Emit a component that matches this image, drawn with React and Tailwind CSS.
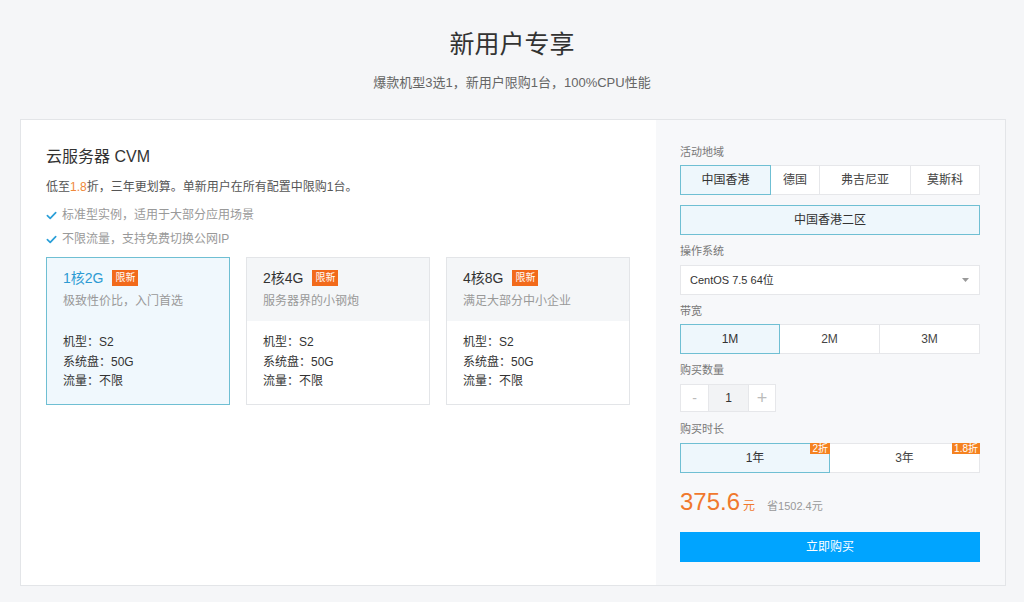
import React, { useState } from "react";

const FONT = "font-['Liberation_Sans','Noto_Sans_CJK_SC',sans-serif]";

const PLANS = [
  { name: "1核2G", desc: "极致性价比，入门首选" },
  { name: "2核4G", desc: "服务器界的小钢炮" },
  { name: "4核8G", desc: "满足大部分中小企业" },
];

// widths include the 1px overlap of the shared border
const REGIONS = [
  { name: "中国香港", w: "w-[91px]" },
  { name: "德国", w: "w-[50px]" },
  { name: "弗吉尼亚", w: "w-[92px]" },
  { name: "莫斯科", w: "w-[70px]" },
];

const Check = () => (
  <svg className="w-[11px] h-[11px] mr-[5px]" viewBox="0 0 12 12" fill="none">
    <path d="M1.5 6.2 L4.6 9.2 L10.6 2.8" stroke="#2a9fd8" strokeWidth="1.8" strokeLinecap="round" strokeLinejoin="round" />
  </svg>
);

const Label = ({ children, className = "" }) => (
  <div className={`text-[11px] leading-[16px] text-[#777] ${className}`}>{children}</div>
);

const optionClass = (active) =>
  active
    ? "relative z-10 border border-[#6fbfd3] bg-[#eef7fc] text-[#333]"
    : "relative border border-[#e6e7ea] bg-white text-[#444]";

const App = () => {
  const [plan, setPlan] = useState(0);
  const [region, setRegion] = useState(0);
  const [bw, setBw] = useState(0);
  const [years, setYears] = useState(0);
  const [count, setCount] = useState(1);

  return (
    <div className={`min-h-[602px] bg-[#f5f6f8] ${FONT}`}>
      <div className="pt-[28px] text-center">
        <h1 className="text-[25px] leading-[32px] text-[#333]">新用户专享</h1>
        <p className="mt-[13px] text-[13px] leading-[20px] text-[#666]">
          爆款机型3选1，新用户限购1台，100%CPU性能
        </p>
      </div>

      <div className="mt-[26px] mx-[20px] w-[986px] h-[467px] border border-[#e3e5e8] flex">
        {/* left */}
        <div className="w-[635px] bg-white px-[25px] pt-[26px]">
          <h2 className="text-[16px] leading-[22px] text-[#333]">云服务器 CVM</h2>
          <p className="mt-[9px] text-[12px] leading-[20px] text-[#555]">
            低至<span className="text-[#f0883a]">1.8</span>折，三年更划算。单新用户在所有配置中限购1台。
          </p>
          <div className="mt-[8px] flex items-center text-[12px] leading-[20px] text-[#999]">
            <Check />标准型实例，适用于大部分应用场景
          </div>
          <div className="mt-[4px] flex items-center text-[12px] leading-[20px] text-[#999]">
            <Check />不限流量，支持免费切换公网IP
          </div>

          <div className="mt-[8px] flex gap-[16px]">
            {PLANS.map((p, i) => {
              const active = plan === i;
              return (
                <div
                  key={p.name}
                  onClick={() => setPlan(i)}
                  className={`w-[184px] h-[148px] border cursor-pointer ${
                    active ? "border-[#6fbfd3] bg-[#f0f8fd]" : "border-[#e3e5e8] bg-white"
                  }`}
                >
                  <div className={`h-[63px] px-[16px] pt-[10px] ${active ? "" : "bg-[#f4f6f8]"}`}>
                    <div className="flex items-center h-[20px]">
                      <span className={`text-[14px] ${active ? "text-[#2d9bd3]" : "text-[#333]"}`}>{p.name}</span>
                      <span className="ml-[9px] bg-[#f26a1b] text-white text-[10px] leading-[16px] px-[3px]">限新</span>
                    </div>
                    <div className="mt-[4px] text-[12px] leading-[18px] text-[#999]">{p.desc}</div>
                  </div>
                  <div className="px-[16px] pt-[12px] text-[12px] leading-[19.5px] text-[#333]">
                    <div>机型：S2</div>
                    <div>系统盘：50G</div>
                    <div>流量：不限</div>
                  </div>
                </div>
              );
            })}
          </div>
        </div>

        {/* right */}
        <div className="flex-1 bg-[#f7f8fa] pl-[24px] pr-[25px] pt-[24px]">
          <Label>活动地域</Label>
          <div className="mt-[5px] flex">
            {REGIONS.map((r, i) => (
              <button
                key={r.name}
                onClick={() => setRegion(i)}
                className={`${r.w} h-[30px] text-[12px] ${i > 0 ? "-ml-px" : ""} ${optionClass(region === i)}`}
              >
                {r.name}
              </button>
            ))}
          </div>
          <button className={`mt-[10px] w-[300px] h-[30px] text-[12px] ${optionClass(true)}`}>中国香港二区</button>

          <Label className="mt-[8px]">操作系统</Label>
          <div className="mt-[6px] h-[30px] border border-[#e6e7ea] bg-white flex items-center justify-between pl-[9px] pr-[10px]">
            <span className="text-[11px] text-[#333]">CentOS 7.5 64位</span>
            <svg className="w-[7px] h-[4px]" viewBox="0 0 7 4">
              <path d="M0 0 L7 0 L3.5 4 Z" fill="#999" />
            </svg>
          </div>

          <Label className="mt-[8px]">带宽</Label>
          <div className="mt-[5px] flex">
            {["1M", "2M", "3M"].map((b, i) => (
              <button
                key={b}
                onClick={() => setBw(i)}
                className={`${i === 0 ? "w-[100px]" : "w-[101px] -ml-px"} h-[30px] text-[12px] ${optionClass(bw === i)}`}
              >
                {b}
              </button>
            ))}
          </div>

          <Label className="mt-[8px]">购买数量</Label>
          <div className="mt-[6px] flex h-[28px] text-[#bbb]">
            <button
              onClick={() => setCount(Math.max(1, count - 1))}
              className="w-[29px] border border-[#e6e7ea] bg-white text-[14px]"
            >
              -
            </button>
            <div className="w-[39px] border-y border-[#e6e7ea] bg-[#f2f3f5] flex items-center justify-center text-[12px] text-[#333]">
              {count}
            </div>
            <button
              onClick={() => setCount(count + 1)}
              className="w-[28px] border border-[#e6e7ea] bg-white text-[18px] font-light"
            >
              +
            </button>
          </div>

          <Label className="mt-[9px]">购买时长</Label>
          <div className="mt-[6px] flex">
            {[
              { t: "1年", d: "2折" },
              { t: "3年", d: "1.8折" },
            ].map((y, i) => (
              <button
                key={y.t}
                onClick={() => setYears(i)}
                className={`${i > 0 ? "-ml-px w-[151px]" : "w-[150px]"} h-[30px] text-[12px] ${optionClass(years === i)}`}
              >
                {y.t}
                <span className="absolute -top-px -right-px bg-[#f58220] text-white text-[10px] leading-[11px] px-[2px]">
                  {y.d}
                </span>
              </button>
            ))}
          </div>

          <div className="mt-[13px] flex items-baseline h-[32px]">
            <span className="text-[24px] leading-[32px] text-[#f0782d]">375.6</span>
            <span className="ml-[3px] text-[12px] text-[#f0782d]">元</span>
            <span className="ml-[12px] text-[11px] text-[#999]">省1502.4元</span>
          </div>

          <button className="mt-[14px] w-[300px] h-[30px] bg-[#00a4ff] text-white text-[12px]">立即购买</button>
        </div>
      </div>
    </div>
  );
};

export default App;
